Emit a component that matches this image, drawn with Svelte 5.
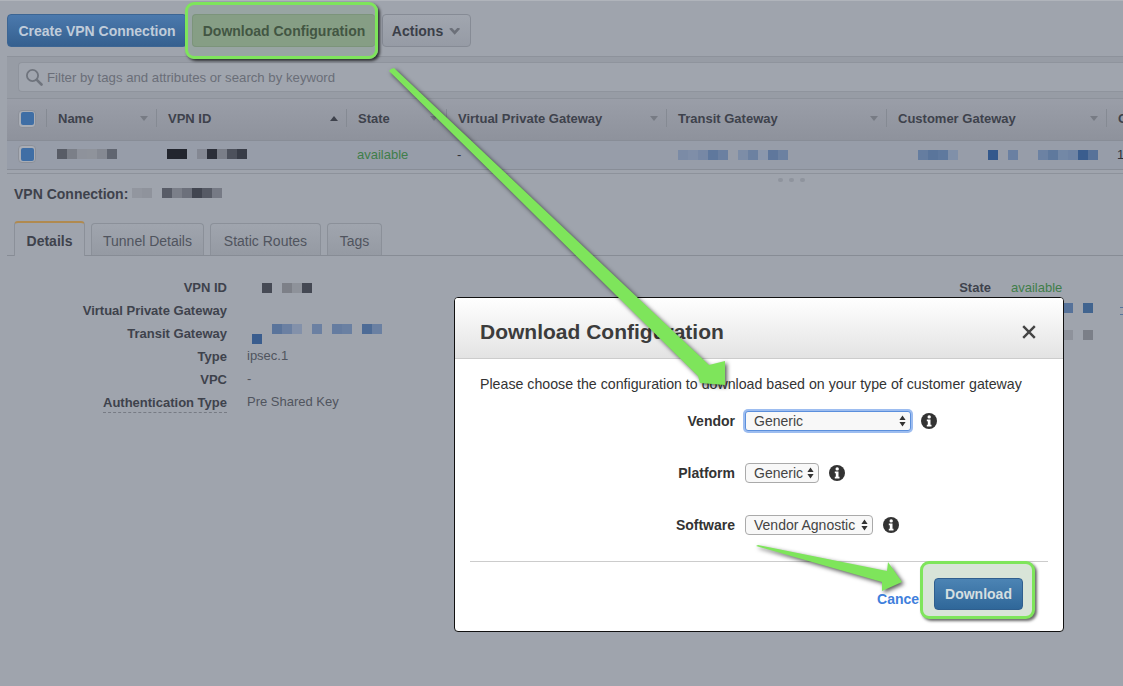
<script lang="ts">
	const columns = [
		{ name: 'Name', width: 110, sort: 'down' },
		{ name: 'VPN ID', width: 190, sort: 'up' },
		{ name: 'State', width: 100, sort: 'down' },
		{ name: 'Virtual Private Gateway', width: 220, sort: 'down' },
		{ name: 'Transit Gateway', width: 220, sort: 'down' },
		{ name: 'Customer Gateway', width: 220, sort: 'down' },
		{ name: 'C', width: 17, sort: '' }
	];

	// redacted values, one entry per 10px block, '' leaves a gap
	const nameBlur = ['#585c66', '#7b7f88', '#8e929b', '#8f939b', '#858992', '#606570'];
	const idBlur = ['#22252e', '#22252e', '', '#848893', '#2b2e38', '#7a7e88', '#4d515c', '#383c47'];
	const transitBlur = ['#7b8ba6', '#7f8ea8', '#7788a5', '#5f789d', '#6b80a1', '', '#7d8da7', '#6c81a1', '#8b97ac', '#5f779c', '#6c81a1'];
	const customerBlur = ['#657da0', '#5a759b', '#5f799e', '#8090a9', '', '', '', '#33588c', '', '#6a80a2', '', '', '#6c82a3', '#5f799d', '#7388a6', '#6f84a4', '#3a5d8e', '#577299'];
	const titleBlur = ['#92969f', '#8f939c', '', '#585c67', '#7b7f89', '#6c707b', '#414550', '#565a65', '#767a85'];
	const detailIdBlur = ['#464a55', '', '#7d8088', '#8e929a', '#444853'];
	const detailTransitBlur = ['#5a749b', '#6b80a2', '#8391aa', '', '#6b80a2', '', '#657ca0', '#6a80a2', '', '#4d6b96', '#6a80a2'];

	const tabs = [
		{ label: 'Details', width: 71 },
		{ label: 'Tunnel Details', width: 113 },
		{ label: 'Static Routes', width: 111 },
		{ label: 'Tags', width: 55 }
	];
</script>

{#snippet blur(blocks: string[])}
	<span class="blur">
		{#each blocks as color}
			<i style:background={color || 'transparent'}></i>
		{/each}
	</span>
{/snippet}

{#snippet checkbox()}
	<span class="check"><span></span></span>
{/snippet}

{#snippet info()}
	<svg class="info" viewBox="0 0 16 16" width="16" height="16">
		<circle cx="8" cy="8" r="8" fill="#333" />
		<circle cx="8.2" cy="3.9" r="1.7" fill="#fff" />
		<path d="M5.8 6.6h3.7v5.2h1v1.6H5.8v-1.6h1V8.2h-1z" fill="#fff" />
	</svg>
{/snippet}

{#snippet updown()}
	<svg class="updown" viewBox="0 0 7 12" width="7" height="12">
		<path d="M3.5 0.5 6.6 5H.4zM3.5 11.5.4 7h6.2z" fill="#333" />
	</svg>
{/snippet}

<div class="page">
	<div class="toolbar">
		<button class="btn primary">Create VPN Connection</button>
		<button class="btn tinted">Download Configuration</button>
		<button class="btn actions">Actions<span class="caret"></span></button>
		<div class="highlight"></div>
	</div>

	<div class="filter-band">
		<div class="search">
			<svg viewBox="0 0 18 18" width="18" height="18">
				<circle cx="7.5" cy="7.5" r="5.6" fill="none" stroke="#6f747d" stroke-width="1.8" />
				<path d="M11.8 11.8 16.5 16.5" stroke="#6f747d" stroke-width="2.6" stroke-linecap="round" />
			</svg>
			<span>Filter by tags and attributes or search by keyword</span>
		</div>
	</div>

	<div class="table-head">
		<div class="check-cell">{@render checkbox()}</div>
		{#each columns as col}
			<div class="th" style:width="{col.width}px">
				<span>{col.name}</span>
				{#if col.sort}<i class="sort {col.sort}"></i>{/if}
			</div>
		{/each}
	</div>
	<div class="table-row">
		<div class="check-cell">{@render checkbox()}</div>
		<div class="td" style:width="110px">{@render blur(nameBlur)}</div>
		<div class="td" style:width="190px">{@render blur(idBlur)}</div>
		<div class="td green" style:width="100px">available</div>
		<div class="td" style:width="220px">-</div>
		<div class="td" style:width="220px"><span class="indent-t">{@render blur(transitBlur)}</span></div>
		<div class="td" style:width="220px"><span class="indent-c">{@render blur(customerBlur)}</span></div>
		<div class="td" style:width="17px">1</div>
	</div>
	<div class="resize"><i></i><i></i><i></i></div>

	<div class="conn-title"><b>VPN Connection:</b>{@render blur(titleBlur)}</div>

	<div class="tabs">
		{#each tabs as tab, i}
			<div class="tab" class:active={i === 0} style:width="{tab.width}px">{tab.label}</div>
		{/each}
	</div>

	<div class="details">
		<dl class="left">
			<dt>VPN ID</dt>
			<dd><span class="shift-id">{@render blur(detailIdBlur)}</span></dd>
			<dt>Virtual Private Gateway</dt>
			<dd></dd>
			<dt>Transit Gateway</dt>
			<dd class="transit">
				<div class="shift-a">{@render blur(detailTransitBlur)}</div>
				<div class="shift-b">{@render blur(['#3a5d8e'])}</div>
			</dd>
			<dt>Type</dt>
			<dd>ipsec.1</dd>
			<dt>VPC</dt>
			<dd>-</dd>
			<dt><span class="dashed">Authentication Type</span></dt>
			<dd>Pre Shared Key</dd>
		</dl>
		<dl class="right">
			<dt>State</dt>
			<dd class="green">available</dd>
			<dt></dt>
			<dd class="top"><span class="shift-r">{@render blur(['#56729a', '', '#41648f'])}</span><em></em></dd>
			<dt></dt>
			<dd><span class="shift-r">{@render blur(['#8e929b', '', '#7b7f88'])}</span></dd>
		</dl>
	</div>

	<div class="modal">
		<header>
			<h2>Download Configuration</h2>
			<svg class="close" viewBox="0 0 14 14" width="14" height="14">
				<path d="M1.2 1.2 12.8 12.8M12.8 1.2 1.2 12.8" stroke="#444" stroke-width="2.4" />
			</svg>
		</header>
		<p>Please choose the configuration to download based on your type of customer gateway</p>
		<div class="form">
			<b>Vendor</b>
			<div class="field">
				<div class="select focus" style:width="166px"><span>Generic</span>{@render updown()}</div>
				{@render info()}
			</div>
			<b>Platform</b>
			<div class="field">
				<div class="select" style:width="74px"><span>Generic</span>{@render updown()}</div>
				{@render info()}
			</div>
			<b>Software</b>
			<div class="field">
				<div class="select" style:width="128px"><span>Vendor Agnostic</span>{@render updown()}</div>
				{@render info()}
			</div>
		</div>
		<footer>
			<span class="cancel">Cancel</span>
			<div class="download-wrap"><button class="download">Download</button></div>
		</footer>
	</div>

	<svg class="arrows" viewBox="0 0 1123 686" width="1123" height="686">
		<polygon points="391,69 394,68 709,365 725,361 725,385 700,383 698,376 389,71" />
		<polygon points="756,546 758,545 887,571 888,562 902,582 882,591 882,582" />
	</svg>
</div>

<style>
	:global(body) {
		margin: 0;
	}

	.page {
		position: relative;
		width: 1123px;
		height: 686px;
		overflow: hidden;
		background: #9fa4ad;
		font-family: 'Liberation Sans', Arial, sans-serif;
		font-size: 13px;
		color: #3e424c;
	}

	.blur {
		display: inline-flex;
		vertical-align: middle;
	}

	.blur i {
		display: block;
		width: 10px;
		height: 10px;
	}

	.toolbar {
		position: relative;
		display: flex;
		gap: 8px;
		height: 56px;
		padding: 14px 0 0 7px;
		box-sizing: border-box;
		border-top: 1px solid #b0b4bb;
	}

	.btn {
		height: 33px;
		padding: 0;
		border-radius: 4px;
		border: 1px solid #868b95;
		font: bold 14px 'Liberation Sans', Arial, sans-serif;
		margin-top: -1px;
	}

	.primary {
		width: 180px;
		border-color: #3c6593;
		background: linear-gradient(#4b79ad, #35608f);
		color: #c0ccda;
	}

	.tinted {
		width: 183px;
		margin-left: -3px;
		border-color: #7f9180;
		background: #8a9d8b;
		color: #3d4a40;
		border-right: 0;
	}

	.actions {
		margin-left: -1px;
		width: 89px;
		padding-right: 1px;
		background: linear-gradient(#a1a6af, #969ba5);
		color: #3b3f49;
	}

	.caret {
		display: inline-block;
		width: 11px;
		height: 8px;
		margin-left: 6px;
		vertical-align: 0;
		background: #6c7079;
		clip-path: polygon(0 15%, 22% 0, 50% 40%, 78% 0, 100% 15%, 50% 90%);
	}

	.highlight {
		position: absolute;
		left: 185px;
		top: 1px;
		width: 193px;
		height: 57px;
		box-sizing: border-box;
		border: 3px solid #7ee55b;
		border-radius: 9px;
		background: rgba(110, 170, 90, 0.12);
		box-shadow: 2px 2px 3px rgba(0, 0, 0, 0.7);
	}

	.filter-band {
		margin-left: 7px;
		height: 42px;
		padding: 5px 0 0 11px;
		box-sizing: border-box;
		background: #979ca5;
		border-top: 1px solid #8d929b;
	}

	.search {
		display: flex;
		align-items: center;
		gap: 4px;
		height: 30px;
		padding-left: 6px;
		box-sizing: border-box;
		background: #a0a5ae;
		border: 1px solid #8f949d;
		border-right: 0;
		border-radius: 4px 0 0 4px;
		color: #6a6e78;
		font-size: 13.2px;
	}

	.table-head,
	.table-row {
		display: flex;
		margin-left: 7px;
		white-space: nowrap;
	}

	.table-head {
		height: 42px;
		padding-bottom: 2px;
		background: linear-gradient(#9a9ea8, #8e929c);
		border-top: 1px solid #8d929b;
		box-sizing: border-box;
	}

	.table-row {
		height: 30px;
		padding-bottom: 2px;
		background: #979da9;
		border-top: 1px solid #888d97;
		border-bottom: 1px solid #888d97;
		box-sizing: border-box;
	}

	.check-cell {
		display: flex;
		align-items: center;
		width: 39px;
		padding-left: 11px;
		box-sizing: border-box;
	}

	.check {
		display: flex;
		align-items: center;
		justify-content: center;
		width: 18px;
		height: 18px;
		box-sizing: border-box;
		border: 1px solid #8c9099;
		border-radius: 4px;
		background: #a9adb5;
	}

	.check span {
		width: 13px;
		height: 13px;
		border-radius: 2px;
		background: #3f6ea5;
	}

	.th {
		position: relative;
		display: flex;
		align-items: center;
		padding-left: 12px;
		box-sizing: border-box;
		font-weight: bold;
		color: #3e424c;
	}

	.th::before {
		content: '';
		position: absolute;
		left: 0;
		top: 10px;
		height: 18px;
		border-left: 1px solid #858a93;
	}

	.sort {
		position: absolute;
		right: 8px;
		top: 17px;
		border-left: 4px solid transparent;
		border-right: 4px solid transparent;
	}

	.sort.down {
		border-top: 5px solid #777b84;
	}

	.sort.up {
		border-bottom: 5px solid #3e424c;
	}

	.td {
		display: flex;
		align-items: center;
		padding-left: 11px;
		box-sizing: border-box;
		color: #2f323b;
	}

	.indent-t {
		margin-left: 1px;
	}

	.indent-c {
		margin-left: 21px;
	}

	.green {
		color: #3f7e4a !important;
	}

	.resize {
		display: flex;
		justify-content: center;
		gap: 6px;
		margin: 3px 0 0 7px;
		padding: 4px 0 0 452px;
		height: 4px;
		width: 664px;
		border-top: 1px solid #8d929b;
	}

	.resize i {
		width: 5px;
		height: 4px;
		background: #8f949d;
		border-radius: 2px;
	}

	.conn-title {
		display: flex;
		align-items: center;
		gap: 4px;
		margin: 4px 0 0 14px;
		font-size: 14px;
		line-height: 16px;
	}

	.conn-title .blur {
		margin-top: -3px;
	}

	.tabs {
		display: flex;
		gap: 6px;
		height: 35px;
		margin: 19px 0 0 7px;
		padding-left: 7px;
		box-sizing: border-box;
		border-bottom: 1px solid #878c95;
	}

	.tab {
		box-sizing: border-box;
		padding-top: 9px;
		margin-top: 2px;
		text-align: center;
		font-size: 14px;
		color: #50545e;
		background: linear-gradient(#a0a5ae, #959aa3);
		border: 1px solid #8b9099;
		border-bottom: 0;
		border-radius: 4px 4px 0 0;
	}

	.tab.active {
		margin-top: 0;
		margin-bottom: -1px;
		padding-top: 10px;
		font-weight: bold;
		color: #3e424c;
		background: #9fa4ad;
		border-top: 2px solid #b08a50;
	}

	.details {
		position: relative;
		display: flex;
		margin-top: 20px;
	}

	dl {
		display: grid;
		grid-auto-rows: 23px;
		column-gap: 20px;
		margin: 0;
		align-items: center;
	}

	.left {
		grid-template-columns: 227px 300px;
		width: 700px;
		flex: none;
	}

	.right {
		grid-template-columns: 291px 112px;
		flex: none;
	}

	dt {
		text-align: right;
		font-weight: bold;
		color: #3e424c;
	}

	dd {
		margin: 0;
		color: #50545e;
		white-space: nowrap;
		position: relative;
	}

	.left dd {
		margin-top: -2px;
	}

	.dashed {
		border-bottom: 1px dashed #777b84;
		padding-bottom: 2px;
	}

	.shift-id {
		margin-left: 15px;
	}

	.transit {
		display: flex;
		flex-direction: column;
		align-items: flex-start;
		margin-top: 0 !important;
	}

	.shift-a,
	.shift-b {
		height: 10px;
		line-height: 0;
	}

	.shift-a {
		margin-left: 25px;
	}

	.shift-b {
		margin-left: 5px;
	}

	.shift-r {
		margin-left: 52px;
	}

	.top {
		align-self: start;
	}

	.top em {
		position: absolute;
		left: 109px;
		top: 8px;
		width: 3px;
		height: 6px;
		border-top: 1px solid #5a749b;
		border-bottom: 1px solid #5a749b;
	}

	.modal {
		position: absolute;
		left: 454px;
		top: 297px;
		width: 610px;
		height: 335px;
		box-sizing: border-box;
		background: #fff;
		border: 1px solid #111;
		border-radius: 4px;
		color: #333;
		font-size: 14px;
	}

	.modal header {
		display: flex;
		align-items: center;
		justify-content: space-between;
		height: 61px;
		padding: 7px 27px 0 25px;
		box-sizing: border-box;
		background: linear-gradient(#fff, #e3e3e3);
		border-bottom: 1px solid #ccc;
		border-radius: 3px 3px 0 0;
	}

	h2 {
		margin: 0;
		font-size: 21px;
		color: #3c3c3c;
	}

	.close {
		margin-top: 1px;
	}

	.modal p {
		margin: 17px 0 0 25px;
		font-size: 14.2px;
		line-height: 16px;
		white-space: nowrap;
	}

	.form {
		display: grid;
		grid-template-columns: 280px 1fr;
		column-gap: 10px;
		row-gap: 32px;
		margin-top: 19px;
		align-items: center;
	}

	.form b {
		text-align: right;
	}

	.field {
		display: flex;
		align-items: center;
		gap: 10px;
	}

	.select {
		display: flex;
		align-items: center;
		justify-content: space-between;
		height: 20px;
		padding: 0 4px 0 8px;
		box-sizing: border-box;
		background: #f8f8f8;
		border: 1px solid #aaa;
		border-radius: 4px;
		color: #444;
		white-space: nowrap;
	}

	.select.focus {
		border-color: #5b8fdc;
		box-shadow: 0 0 0 2px #9dbdf0;
		border-radius: 3px;
	}

	.modal footer {
		display: flex;
		justify-content: flex-end;
		margin: 26px 15px 0;
		padding-right: 13px;
		border-top: 1px solid #ccc;
		height: 60px;
	}

	.cancel {
		margin: 29px -3px 0 0;
		font-weight: bold;
		color: #3f7fdc;
		line-height: 16px;
	}

	.download-wrap {
		position: relative;
		width: 115px;
		height: 58px;
		margin-top: -1px;
		box-sizing: border-box;
		padding: 14px 0 0 11px;
		background: #d8e4d8;
		border: 3px solid #7ee55b;
		border-radius: 9px;
		box-shadow: 2px 2px 3px rgba(0, 0, 0, 0.6);
	}

	.download {
		width: 89px;
		height: 32px;
		border: 1px solid #2f5f8e;
		border-radius: 4px;
		background: linear-gradient(#4c84b4, #2f6799);
		color: #d5dfe0;
		font: bold 14px 'Liberation Sans', Arial, sans-serif;
	}

	.arrows {
		position: absolute;
		left: 0;
		top: 0;
		fill: #7ee55b;
		filter: drop-shadow(2px 2px 2px rgba(0, 0, 0, 0.65));
		pointer-events: none;
	}
</style>
